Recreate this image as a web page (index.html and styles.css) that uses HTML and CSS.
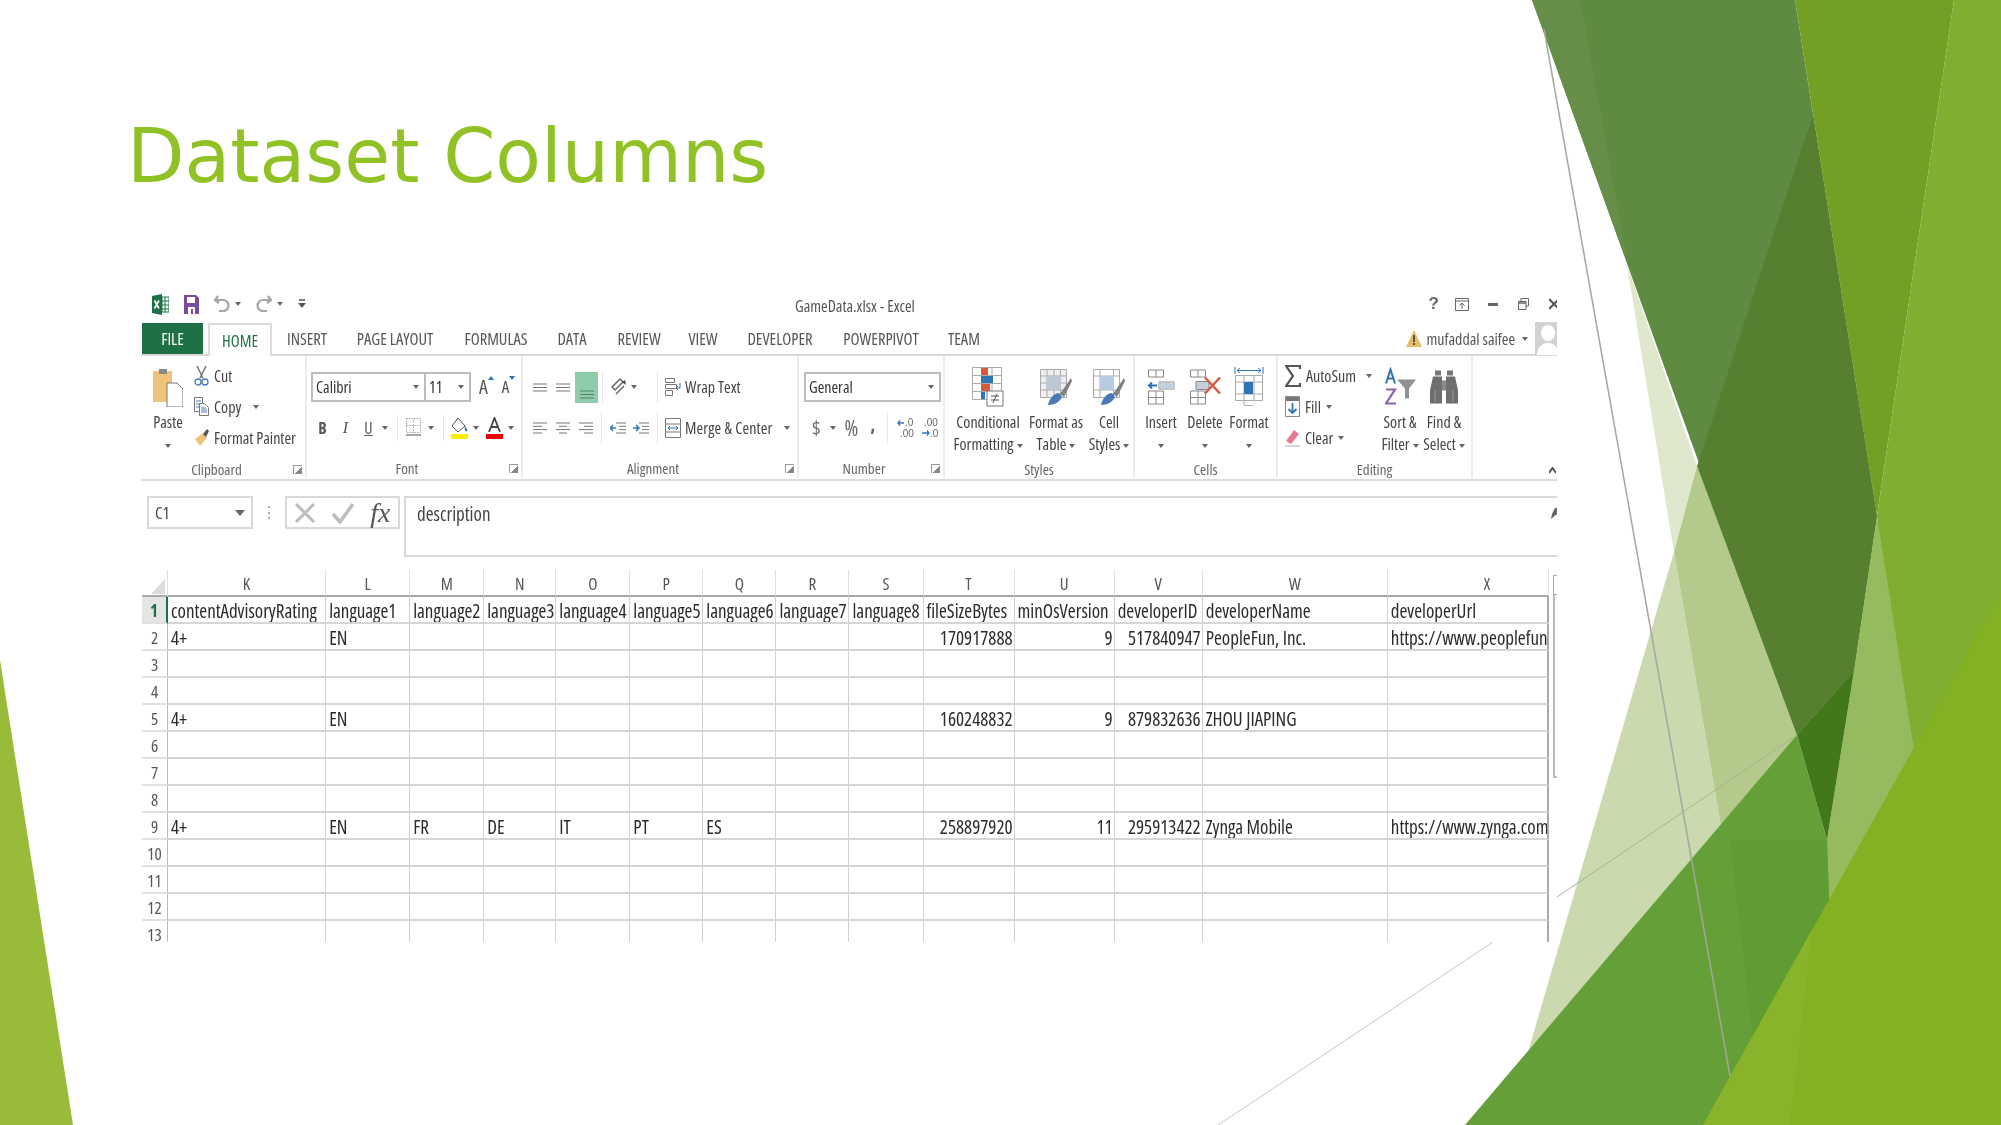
FILE: index.html
```html
<!DOCTYPE html>
<html lang="en">
<head>
<meta charset="utf-8">
<title>Dataset Columns</title>
<link rel="stylesheet" href="styles.css">
</head>
<body>
<main class="slide">
<svg class="bg" viewBox="0 0 2001 1125" width="2001" height="1125" aria-hidden="true">
  <polygon points="0,660 73,1125 0,1125" fill="#98bc3a"/>
  <polygon points="1627,265 1697,466 1674,552" fill="#dfe8cd"/>
  <polygon points="1674,552 1725,850 1528,1052" fill="#cbd9ae"/>
  <polygon points="1674,552 1697,466 1797,735 1725,850" fill="#b4ca8c"/>
  <polygon points="1532,0 1795,0 1877,516 1854,671 1797,735" fill="#5f8a41"/>
  <polygon points="1532,0 1580,0 1628,265" fill="#668e49"/>
  <polygon points="1813,115 1877,516 1854,671 1797,735 1697,466" fill="#567f30"/>
  <polygon points="1795,0 1954,0 1877,516" fill="#739f25"/>
  <polygon points="1954,0 2001,0 2001,620 1900,780 1877,516" fill="#80ae30"/>
  <polygon points="1877,516 1914,750 1820,930 1827,840 1854,671" fill="#96bb5f"/>
  <polygon points="1465,1125 1797,735 1827,840 1830,930 1720,1125" fill="#659f37"/>
  <polygon points="1730,839 1827,840 1830,930 1753,1040" fill="#5f9c31"/>
  <polygon points="1797,735 1854,671 1827,840" fill="#42781a"/>
  <polygon points="1703,1125 2001,592 2001,1125" fill="#84b024"/>
  <polygon points="1703,1125 1812,930 1790,1125" fill="#88b32b"/>
  <line x1="1544" y1="29" x2="1730" y2="1076" stroke="#a3a89a" stroke-width="1.5"/>
  <line x1="1557" y1="897" x2="1797" y2="735" stroke="#a9b392" stroke-width="1"/>
  <line x1="1218" y1="1125" x2="1493" y2="942" stroke="#c8c8c8" stroke-width="1"/>
</svg>

<h1 class="title">Dataset Columns</h1>

<section class="excel">
  <header class="titlebar">
    <div class="tb-left">
      <svg class="ml11" width="17" height="21" viewBox="0 0 17 21"><path d="M0 2 10 0v21L0 19z" fill="#1e7145"/><path d="M10 3h7v15h-7z" fill="#fff" stroke="#1e7145"/><path d="M10 7h7M10 11h7M10 15h7M13 3v15" stroke="#1e7145" fill="none"/><path d="M2.5 6.5 7 14.500M7 6.500 2.500 14.500" stroke="#fff" stroke-width="1.6"/></svg>
      <svg class="ml15" width="15" height="19" viewBox="0 0 15 19"><path d="M0 0h12l3 3v16H0z" fill="#7b4c9e"/><path d="M3 2h8v6H3z" fill="#fff"/><path d="M4 12h7v7H4z" fill="#fff"/><path d="M7 14h2v5H7z" fill="#7b4c9e"/></svg>
      <svg class="ml15" width="16" height="18" viewBox="0 0 16 18"><path d="M4 1 1 5l4 3M1.500 5H9a5 5 0 0 1 0 11H5" fill="none" stroke="#a6a6a6" stroke-width="2.200"/></svg>
      <i class="caret ml5"></i>
      <svg class="ml15" width="16" height="18" viewBox="0 0 16 18"><path d="M12 1l3 4-4 3M14.500 5H7a5 5 0 0 0 0 11h4" fill="none" stroke="#a6a6a6" stroke-width="2.200"/></svg>
      <i class="caret ml5"></i>
      <svg class="ml15" width="8" height="10" viewBox="0 0 8 10"><path d="M1 1h6" stroke="#555" stroke-width="1.500"/><path d="M0 4h8L4 9z" fill="#555"/></svg>
    </div>
    <div class="tb-title">GameData.xlsx - Excel</div>
    <div class="tb-right">
      <span class="help">?</span>
      <svg class="ml16" width="14" height="13" viewBox="0 0 14 13"><path d="M.5.500h13v12H.5z" fill="none" stroke="#666"/><path d="M1 3h12M7 11V5M4.500 7.500 7 5l2.500 2.500" fill="none" stroke="#666"/></svg>
      <svg class="ml19" width="10" height="3" viewBox="0 0 10 3"><path d="M0 0h10v3H0z" fill="#666"/></svg>
      <svg class="ml20" width="11" height="12" viewBox="0 0 11 12"><path d="M3 3V.500h7.500V8H8M.500 3.500H8V11.500H.500z" fill="none" stroke="#666"/><path d="M.5 5H8" stroke="#666" stroke-width="1.500"/></svg>
      <svg class="ml20" width="8" height="12" viewBox="0 0 8 12"><path d="M0 1 10 11M0 11 10 1" fill="none" stroke="#555" stroke-width="2"/></svg>
    </div>
  </header>

  <nav class="tabs">
    <div class="tab tab-file w61">FILE</div>
    <div class="tab tab-home w64">HOME</div>
    <div class="tab w70">INSERT</div>
    <div class="tab w106">PAGE LAYOUT</div>
    <div class="tab w96">FORMULAS</div>
    <div class="tab w56">DATA</div>
    <div class="tab w78">REVIEW</div>
    <div class="tab w50">VIEW</div>
    <div class="tab w104">DEVELOPER</div>
    <div class="tab w98">POWERPIVOT</div>
    <div class="tab w68">TEAM</div>
    <div class="user">
      <svg width="16" height="17" viewBox="0 0 16 17"><path d="M8 0 16 17H0z" fill="#e8bd6a"/><path d="M7 5h2v7H7zM7 13h2v2H7z" fill="#554"/></svg>
      <span class="user-name">mufaddal saifee</span>
      <i class="caret ml7"></i>
      <svg class="ml7" width="22" height="33" viewBox="0 0 22 33"><path d="M0 0h22v33H0z" fill="#d2d2d2"/><ellipse cx="13" cy="11" rx="7" ry="8" fill="#fff"/><path d="M2 33c0-9 6-12 11-12s9 3 9 7v5z" fill="#fff"/></svg>
    </div>
  </nav>

  <div class="ribbon">
    <div class="group g-clip">
      <div class="group-body">
        <div class="big w52">
          <svg class="big-icon" width="30" height="40" viewBox="0 0 30 40"><path d="M0 4h19v31H0z" fill="#eec37a"/><path d="M6 2h8v5H6z" fill="#8a8a8a"/><path d="M14 16h10l6 6v18H14z" fill="#fff" stroke="#777"/></svg>
          <div class="big-label">Paste<br><i class="caret"></i></div>
        </div>
        <div class="small-col up1">
          <div class="small"><svg width="15" height="20" viewBox="0 0 15 20"><path d="M3 0l6 12M12 0 6 12" stroke="#777" stroke-width="1.500"/><circle cx="4" cy="16" r="3" fill="none" stroke="#4a7ab5" stroke-width="1.300"/><circle cx="11" cy="16" r="3" fill="none" stroke="#4a7ab5" stroke-width="1.300"/></svg><span>Cut</span></div>
          <div class="small"><svg width="15" height="19" viewBox="0 0 15 19"><path d="M.5.500h8v14h-8z" fill="#fff" stroke="#777"/><path d="M5.500 6.500h5l4 4v8h-9z" fill="#fff" stroke="#777"/><path d="M2 4h5M2 7h3M2 10h3M7 11h5M7 13h6M7 15h6" stroke="#4a7ab5"/></svg><span>Copy</span><i class="caret ml12"></i></div>
          <div class="small"><svg width="15" height="18" viewBox="0 0 15 18"><path d="M1 10 9 4l4 5-7 8z" fill="#eec37a"/><path d="M9 5 13 0l2 2-3 6z" fill="#555"/></svg><span>Format Painter</span></div>
        </div>
      </div>
      <div class="group-foot"><span class="group-label">Clipboard</span><span class="launcher"></span></div>
    </div>

    <div class="group g-font">
      <div class="group-body stack">
        <div class="tool-row">
          <div class="combo w115"><span>Calibri</span><i class="caret"></i></div>
          <div class="combo w45 joined"><span>11</span><i class="caret"></i></div>
          <span class="aa aa-up">A</span>
          <span class="aa aa-down">A</span>
        </div>
        <div class="tool-row">
          <span class="fmt b">B</span><span class="fmt i">I</span><span class="fmt u">U</span><i class="caret ml2"></i>
          <span class="vsep ml9"></span>
          <svg class="ml8" width="15" height="20" viewBox="0 0 15 20"><path d="M.5.500h14v14H.5z" fill="none" stroke="#aaa" stroke-dasharray="1.500 1"/><path d="M7.500 1v14M1 7.500h13" stroke="#aaa" stroke-dasharray="1.500 1"/><path d="M0 17h15" stroke="#888" stroke-width="1.500"/></svg>
          <i class="caret ml7"></i>
          <span class="vsep ml9"></span>
          <svg class="ml7" width="17" height="22" viewBox="0 0 17 22"><path d="M7 1 1 9l6 6 7-6z" fill="#fff" stroke="#555"/><path d="M14 9c2 3 3 4 2 5-1 1-3 0-2-5z" fill="#2f75b5"/><path d="M0 17h17v5H0z" fill="#ffed00"/></svg>
          <i class="caret ml5"></i>
          <svg class="ml7" width="17" height="22" viewBox="0 0 17 22"><path d="M3 15 8.500 1 14 15M5 10h7" fill="none" stroke="#444" stroke-width="1.800"/><path d="M0 17h17v5H0z" fill="#f00000"/></svg>
          <i class="caret ml5"></i>
        </div>
      </div>
      <div class="group-foot"><span class="group-label">Font</span><span class="launcher"></span></div>
    </div>

    <div class="group g-align">
      <div class="group-body stack">
        <div class="tool-row">
          <svg class="ml10" width="14" height="9" viewBox="0 0 14 9"><path d="M0 1h14M0 4.500h14M0 8h14" stroke="#777"/></svg>
          <svg class="ml9" width="14" height="9" viewBox="0 0 14 9"><path d="M0 1h14M0 4.500h14M0 8h14" stroke="#777"/></svg>
          <span class="align-on ml5"><svg width="14" height="9" viewBox="0 0 14 9"><path d="M0 1h14M0 4.500h14M0 8h14" stroke="#55806a"/></svg></span>
          <span class="vsep ml4 tall"></span>
          <svg class="ml8" width="16" height="18" viewBox="0 0 16 18"><path d="M1 9 9 1l3 3-8 8zM5 16l8-8" fill="none" stroke="#666" stroke-width="1.500"/><path d="M14 2l1 5-4-3z" fill="#444"/></svg>
          <i class="caret ml4"></i>
          <span class="vsep ml20 tall"></span>
          <svg class="ml7" width="16" height="19" viewBox="0 0 16 19"><path d="M.5.500h9v4h-9zM.5 6.500h11v4H.5zM.5 12.500h7v5h-7z" fill="#fff" stroke="#777"/><path d="M15 5v5h-4M13 8l-2 2 2 2" fill="none" stroke="#2f75b5"/></svg>
          <span class="rtext ml4">Wrap Text</span>
        </div>
        <div class="tool-row">
          <svg class="ml10" width="14" height="12" viewBox="0 0 14 12"><path d="M0 1h14M0 4.300h9M0 7.600h14M0 11h9" stroke="#777"/></svg>
          <svg class="ml9" width="14" height="12" viewBox="0 0 14 12"><path d="M0 1h14M3 4.300h8M0 7.600h14M3 11h8" stroke="#777"/></svg>
          <svg class="ml9" width="14" height="12" viewBox="0 0 14 12"><path d="M0 1h14M5 4.300h9M0 7.600h14M5 11h9" stroke="#777"/></svg>
          <span class="vsep ml8 tall"></span>
          <svg class="ml8" width="16" height="12" viewBox="0 0 16 12"><path d="M6 1h10M9 4.300h7M9 7.600h7M6 11h10" stroke="#777"/><path d="M6 6H0M3 3 0 6l3 3" fill="none" stroke="#2f75b5" stroke-width="1.500"/></svg>
          <svg class="ml7" width="16" height="12" viewBox="0 0 16 12"><path d="M6 1h10M9 4.300h7M9 7.600h7M6 11h10" stroke="#777"/><path d="M0 6h6M3 3l3 3-3 3" fill="none" stroke="#2f75b5" stroke-width="1.500"/></svg>
          <span class="vsep ml8 tall"></span>
          <svg class="ml7" width="16" height="20" viewBox="0 0 16 20"><path d="M.5.500h15v19H.5zM.5 6h15M.5 14h15" fill="none" stroke="#777"/><path d="M3 10h10M5 8l-2 2 2 2M11 8l2 2-2 2" fill="none" stroke="#2f75b5"/></svg>
          <span class="rtext ml4 merge">Merge &amp; Center</span>
          <i class="caret ml12"></i>
        </div>
      </div>
      <div class="group-foot"><span class="group-label">Alignment</span><span class="launcher"></span></div>
    </div>

    <div class="group g-num">
      <div class="group-body stack">
        <div class="tool-row"><div class="combo w137 ml5"><span>General</span><i class="caret"></i></div></div>
        <div class="tool-row">
          <span class="num ml13">$</span><i class="caret ml9"></i>
          <span class="num ml8 pct">%</span><span class="num comma">,</span>
          <span class="vsep ml12 tall"></span>
          <svg class="ml9" width="17" height="22" viewBox="0 0 17 22"><path d="M7 6H1M3 3.500 1 6l2 2.500" fill="none" stroke="#2f75b5" stroke-width="1.300"/><text class="dec" x="8" y="9">.0</text><text class="dec" x="3" y="20">.00</text></svg>
          <svg class="ml7" width="17" height="22" viewBox="0 0 17 22"><text class="dec" x="3" y="9">.00</text><path d="M1 16h7M6 13.500 8 16l-2 2.500" fill="none" stroke="#2f75b5" stroke-width="1.300"/><text class="dec" x="9" y="20">.0</text></svg>
        </div>
      </div>
      <div class="group-foot"><span class="group-label">Number</span><span class="launcher"></span></div>
    </div>

    <div class="group g-styles">
      <div class="group-body pl9">
        <div class="big w68">
          <svg class="big-icon" width="32" height="40" viewBox="0 0 32 40"><path d="M.5.500h29v32H.5zM.5 8.500h29M.5 16.500h29M.5 24.500h29M10 .500v32M20 .500v32" fill="#fff" stroke="#aaa"/><path d="M9 1h7v7H9zM9 17h9v7H9z" fill="#d9593b"/><path d="M9 9h12v7H9zM9 25h4v7H9z" fill="#2f75b5"/><path d="M15 24h16v15H15z" fill="#fff" stroke="#777"/><path d="M19 29h8M19 33h8M25 27l-4 9" stroke="#555"/></svg>
          <div class="big-label">Conditional<br>Formatting <i class="caret"></i></div>
        </div>
        <div class="big w68">
          <svg class="big-icon" width="32" height="40" viewBox="0 0 32 40"><path d="M.5 2.500h26v28H.5zM.5 9h26M.5 16h26M.5 23h26M7 2.500v28M14 2.500v28M20.500 2.500v28" fill="#eee" stroke="#aaa"/><path d="M7 9h14v14H7z" fill="#bcc8d6"/><path d="M20 27 31 11l1 3-8 16z" fill="#808080"/><path d="M8 38c1-6 6-12 11-12l3 4c-2 4-6 8-14 8z" fill="#4a7ab5"/></svg>
          <div class="big-label">Format as<br>Table <i class="caret"></i></div>
        </div>
        <div class="big w38">
          <svg class="big-icon" width="32" height="40" viewBox="0 0 32 40"><path d="M.5 2.500h26v28H.5zM.5 9h26M.5 23h26M7 2.500v28M20.500 2.500v28" fill="#fff" stroke="#aaa"/><path d="M7 9h14v14H7z" fill="#b7cce2"/><path d="M20 27 31 11l1 3-8 16z" fill="#808080"/><path d="M8 38c1-6 6-12 11-12l3 4c-2 4-6 8-14 8z" fill="#4a7ab5"/></svg>
          <div class="big-label">Cell<br>Styles <i class="caret"></i></div>
        </div>
      </div>
      <div class="group-foot"><span class="group-label full">Styles</span></div>
    </div>

    <div class="group g-cells">
      <div class="group-body pl4">
        <div class="big w44">
          <svg class="big-icon" width="28" height="37" viewBox="0 0 28 37"><path d="M1.500 1.500h15v7h-15zM9 1.500v7M12 13.500h15v7H12zM19.500 13.500v7M1.500 22.500h15v13h-15zM1.500 29h15M9 22.500v13" fill="none" stroke="#888"/><path d="M12 14h15v6H12z" fill="#c3cfdc"/><path d="M10 17H2M5 14l-3 3 3 3" fill="none" stroke="#2f75b5" stroke-width="2"/></svg>
          <div class="big-label">Insert<br><i class="caret"></i></div>
        </div>
        <div class="big w44">
          <svg class="big-icon" width="32" height="37" viewBox="0 0 32 37"><path d="M1.500 1.500h15v7h-15zM9 1.500v7M1.500 22.500h15v13h-15zM1.500 29h15M9 22.500v13" fill="none" stroke="#888"/><path d="M7 13h13v8H7z" fill="#c3cfdc" stroke="#888"/><path d="M16 9l15 16M31 9 16 25" stroke="#d9593b" stroke-width="2.500"/></svg>
          <div class="big-label">Delete<br><i class="caret"></i></div>
        </div>
        <div class="big w44">
          <svg class="big-icon" width="30" height="40" viewBox="0 0 30 40"><path d="M1 0v7M29 0v7M3 3.500h24" fill="none" stroke="#2f75b5"/><path d="M6 1 3 3.500 6 6M24 1l3 2.500L24 6" fill="none" stroke="#2f75b5"/><path d="M1.500 8.500h27v25h-27zM1.500 15h27M1.500 27h27M10 8.500v30M20 8.500v25M10 38.500h9" fill="none" stroke="#aaa"/><path d="M10 15h9v12h-9z" fill="#2f75b5"/></svg>
          <div class="big-label">Format<br><i class="caret"></i></div>
        </div>
      </div>
      <div class="group-foot"><span class="group-label full">Cells</span></div>
    </div>

    <div class="group g-edit">
      <div class="group-body pl7">
        <div class="small-col w93 up1">
          <div class="small"><svg width="16" height="22" viewBox="0 0 16 22"><path d="M15 4V1H1l7 10-7 10h14v-3" fill="none" stroke="#555" stroke-width="2.200"/></svg><span>AutoSum</span><i class="caret ml10"></i></div>
          <div class="small"><svg width="15" height="21" viewBox="0 0 15 21"><path d="M.5.500h14v20H.5z" fill="#fff" stroke="#888"/><path d="M1 1h13v4H1z" fill="#777"/><path d="M7.500 7v10M3.500 13l4 4 4-4" fill="none" stroke="#2f75b5" stroke-width="1.800"/></svg><span>Fill</span><i class="caret ml5"></i></div>
          <div class="small"><svg width="15" height="18" viewBox="0 0 15 18"><path d="M1 12 9 1l5 4-8 10z" fill="#e77a8f"/><path d="M0 17h15" stroke="#aaa"/></svg><span>Clear</span><i class="caret ml5"></i></div>
        </div>
        <div class="big w44">
          <svg class="big-icon" width="31" height="37" viewBox="0 0 31 37"><path d="M1 15 5.500 1 10 15M3 10h5" fill="none" stroke="#2f75b5" stroke-width="2"/><path d="M1 21h9L1 35h10" fill="none" stroke="#8a62ad" stroke-width="2.200"/><path d="M12 11h19l-7 9v10h-4V20z" fill="#909090"/></svg>
          <div class="big-label">Sort &amp;<br>Filter <i class="caret"></i></div>
        </div>
        <div class="big w44">
          <svg class="big-icon" width="28" height="33" viewBox="0 0 28 33"><path d="M5 0h6v5H5zM17 0h6v5h-6z" fill="#777"/><path d="M3 6h9v27H0V20zM16 6h9l3 14v13H16z" fill="#6e6e6e"/><path d="M12 10h4v10h-4z" fill="#8a8a8a"/><path d="M5 20v11M23 20v11" stroke="#9a9a9a"/></svg>
          <div class="big-label">Find &amp;<br>Select <i class="caret"></i></div>
        </div>
      </div>
      <div class="group-foot"><span class="group-label full">Editing</span></div>
    </div>
    <svg class="collapse" width="7" height="7" viewBox="0 0 7 7"><path d="M0 6 3.500 1 7 6" fill="none" stroke="#555" stroke-width="2"/></svg>
  </div>

  <div class="formula">
    <div class="namebox"><span>C1</span><i class="caret caret-lg"></i></div>
    <span class="dots">⋮</span>
    <div class="fxbox">
      <svg width="22" height="22" viewBox="0 0 22 22"><path d="M2 2l18 18M20 2 2 20" stroke="#bdbdbd" stroke-width="3"/></svg>
      <svg width="24" height="22" viewBox="0 0 24 22"><path d="M2 12l7 8L22 2" fill="none" stroke="#bdbdbd" stroke-width="3.500"/></svg>
      <span class="fx">fx</span>
    </div>
    <div class="input"><span>description</span>
      <svg class="pencil" width="6" height="11" viewBox="0 0 6 11"><path d="M0 11 1 6 4 0h2v6z" fill="#666"/></svg>
    </div>
  </div>

  <div class="sheet-wrap">
    <table class="sheet">
      <colgroup><col class="c-r"><col class="c-k"><col class="c-l"><col class="c-m"><col class="c-n"><col class="c-o"><col class="c-p"><col class="c-q"><col class="c-r2"><col class="c-s"><col class="c-t"><col class="c-u"><col class="c-v"><col class="c-w"><col class="c-x"></colgroup>
      <thead>
        <tr><th class="corner"><span></span></th><th>K</th><th>L</th><th>M</th><th>N</th><th>O</th><th>P</th><th>Q</th><th>R</th><th>S</th><th>T</th><th>U</th><th>V</th><th>W</th><th class="col-x">X</th></tr>
      </thead>
      <tbody>
        <tr class="first"><th class="active">1</th><td>contentAdvisoryRating</td><td>language1</td><td>language2</td><td>language3</td><td>language4</td><td>language5</td><td>language6</td><td>language7</td><td>language8</td><td>fileSizeBytes</td><td>minOsVersion</td><td>developerID</td><td>developerName</td><td>developerUrl</td></tr>
        <tr><th>2</th><td>4+</td><td>EN</td><td></td><td></td><td></td><td></td><td></td><td></td><td></td><td class="n">170917888</td><td class="n">9</td><td class="n">517840947</td><td>PeopleFun, Inc.</td><td>https://www.peoplefun</td></tr>
        <tr><th>3</th><td></td><td></td><td></td><td></td><td></td><td></td><td></td><td></td><td></td><td></td><td></td><td></td><td></td><td></td></tr>
        <tr><th>4</th><td></td><td></td><td></td><td></td><td></td><td></td><td></td><td></td><td></td><td></td><td></td><td></td><td></td><td></td></tr>
        <tr><th>5</th><td>4+</td><td>EN</td><td></td><td></td><td></td><td></td><td></td><td></td><td></td><td class="n">160248832</td><td class="n">9</td><td class="n">879832636</td><td>ZHOU JIAPING</td><td></td></tr>
        <tr><th>6</th><td></td><td></td><td></td><td></td><td></td><td></td><td></td><td></td><td></td><td></td><td></td><td></td><td></td><td></td></tr>
        <tr><th>7</th><td></td><td></td><td></td><td></td><td></td><td></td><td></td><td></td><td></td><td></td><td></td><td></td><td></td><td></td></tr>
        <tr><th>8</th><td></td><td></td><td></td><td></td><td></td><td></td><td></td><td></td><td></td><td></td><td></td><td></td><td></td><td></td></tr>
        <tr><th>9</th><td>4+</td><td>EN</td><td>FR</td><td>DE</td><td>IT</td><td>PT</td><td>ES</td><td></td><td></td><td class="n">258897920</td><td class="n">11</td><td class="n">295913422</td><td>Zynga Mobile</td><td>https://www.zynga.com</td></tr>
        <tr><th>10</th><td></td><td></td><td></td><td></td><td></td><td></td><td></td><td></td><td></td><td></td><td></td><td></td><td></td><td></td></tr>
        <tr><th>11</th><td></td><td></td><td></td><td></td><td></td><td></td><td></td><td></td><td></td><td></td><td></td><td></td><td></td><td></td></tr>
        <tr><th>12</th><td></td><td></td><td></td><td></td><td></td><td></td><td></td><td></td><td></td><td></td><td></td><td></td><td></td><td></td></tr>
        <tr><th>13</th><td></td><td></td><td></td><td></td><td></td><td></td><td></td><td></td><td></td><td></td><td></td><td></td><td></td><td></td></tr>
      </tbody>
    </table>
    <div class="vscroll"><span class="vs-btn"></span><span class="vs-thumb"></span></div>
  </div>
</section>
</main>
</body>
</html>
```

FILE: styles.css
```css
* { box-sizing: border-box; }
html, body { margin: 0; padding: 0; background: #fff; }
.slide { position: relative; width: 2001px; height: 1125px; overflow: hidden; background: #fff; }
.bg { position: absolute; left: 0; top: 0; }

.title {
  position: relative;
  margin: 0;
  height: 285px;
  padding: 112px 0 0 127px;
  font: 400 74.700px/90px "DejaVu Sans", sans-serif;
  color: #90c226;
}

.excel {
  position: relative;
  width: 1416px;
  height: 657px;
  margin-left: 141px;
  overflow: hidden;
  background: #fff;
  color: #444;
  font-family: "Open Sans", "Liberation Sans", sans-serif;
  font-stretch: 75%;
  font-size: 16px;
  line-height: 22px;
  filter: blur(.5px);
}

/* utility widths and offsets */
.w38 { width: 38px; } .w44 { width: 44px; } .w45 { width: 45px; } .w50 { width: 50px; }
.w52 { width: 52px; } .w56 { width: 56px; } .w61 { width: 61px; } .w64 { width: 64px; }
.w68 { width: 68px; } .w70 { width: 70px; } .w78 { width: 78px; } .w93 { width: 93px; }
.w96 { width: 96px; } .w98 { width: 98px; } .w104 { width: 104px; } .w106 { width: 106px; }
.w115 { width: 115px; } .w137 { width: 137px; }
.ml2 { margin-left: 2px; } .ml4 { margin-left: 4px; } .ml5 { margin-left: 5px; } .ml7 { margin-left: 7px; }
.ml8 { margin-left: 8px; } .ml9 { margin-left: 9px; } .ml10 { margin-left: 10px; } .ml11 { margin-left: 11px; }
.ml12 { margin-left: 12px; } .ml13 { margin-left: 13px; } .ml15 { margin-left: 15px; } .ml16 { margin-left: 16px; }
.ml19 { margin-left: 19px; } .ml20 { margin-left: 20px; }
.pl4 { padding-left: 4px; } .pl7 { padding-left: 7px; } .pl9 { padding-left: 9px; }
.up1 { margin-top: -1px; }

.caret { display: inline-block; flex: none; width: 0; height: 0; vertical-align: middle;
  border-left: 3.500px solid transparent; border-right: 3.500px solid transparent; border-top: 4px solid #666; }
.caret-lg { border-left-width: 5px; border-right-width: 5px; border-top-width: 6px; }

/* title bar */
.titlebar { display: flex; align-items: center; height: 38px; }
.tb-left { display: flex; align-items: center; width: 654px; flex: none; }
.tb-title { font-size: 16px; color: #555; margin-top: 4px; }
.tb-right { display: flex; align-items: center; margin-left: auto; }
.help { font: 700 17px/20px "Liberation Sans", sans-serif; color: #666; }

/* tabs */
.tabs { display: flex; align-items: stretch; height: 33px; padding-left: 1px; border-bottom: 2px solid #d8d8d8; font-size: 16.500px; }
.tab { flex: none; display: flex; align-items: center; justify-content: center; color: #555; }
.tab-file { background: #1e7145; color: #fff; margin-right: 5px; }
.tab-home { color: #1e7145; background: #fff; border: 2px solid #dcdcdc; border-bottom: 0; height: 33px; }
.user { display: flex; align-items: center; margin-left: auto; font-size: 16px; color: #555; }
.user-name { margin-left: 5px; }

/* ribbon */
.ribbon { position: relative; display: flex; height: 125px; border-bottom: 2px solid #dcdcdc; padding-left: 1px; }
.group { display: flex; flex-direction: column; flex: none; height: 122px; border-right: 2px solid #ececec; }
.g-clip { width: 165px; } .g-font { width: 216px; } .g-align { width: 276px; } .g-num { width: 146px; }
.g-styles { width: 190px; } .g-cells { width: 143px; } .g-edit { width: 195px; }
.group-body { display: flex; height: 101px; padding-top: 5px; }
.group-foot { display: flex; align-items: center; height: 24px; padding-top: 4px; font-size: 15px; color: #666; }
.group-label { flex: 1; text-align: center; }
.launcher { flex: none; width: 9px; height: 9px; margin: 0 3px 0 2px; border-left: 1px solid #999; border-top: 1px solid #999;
  background: linear-gradient(135deg, transparent 55%, #888 55%); }

.big { display: flex; flex-direction: column; align-items: center; flex: none; text-align: center; white-space: nowrap; }
.big-icon { flex: none; height: 40px; margin-top: 6px; margin-bottom: 4px; }
.big-label { line-height: 22px; }
.small-col { display: flex; flex-direction: column; flex: none; }
.small { display: flex; align-items: center; height: 31px; white-space: nowrap; }
.small span { margin-left: 5px; }

.stack { flex-direction: column; padding-top: 16px; gap: 11px; }
.tool-row { display: flex; align-items: center; height: 30px; white-space: nowrap; }
.g-font .tool-row { padding-left: 4px; }
.combo { display: flex; align-items: center; justify-content: space-between; flex: none; height: 30px; padding: 0 5px 0 3px;
  border: 2px solid #bdbdbd; color: #333; background: #fff; }
.joined { border-left: 0; }
.aa { position: relative; font-size: 20px; line-height: 24px; color: #555; }
.aa::after { content: ""; position: absolute; right: -6px; width: 0; height: 0; border-left: 3px solid transparent; border-right: 3px solid transparent; }
.aa-up { margin-left: 8px; }
.aa-up::after { top: 1px; border-bottom: 4px solid #2f75b5; }
.aa-down { margin-left: 14px; font-size: 17px; }
.aa-down::after { top: 1px; border-top: 4px solid #2f75b5; }
.fmt { width: 23px; text-align: center; color: #555; font-size: 16px; }
.b { font-weight: 700; } .i { font-style: italic; font-family: "Liberation Serif", serif; } .u { text-decoration: underline; }
.vsep { flex: none; width: 1px; height: 26px; background: #e6e6e6; }
.tall { height: 30px; }
.align-on { display: flex; align-items: flex-end; justify-content: center; width: 23px; height: 31px; padding-bottom: 4px; background: #8fcdaa; flex: none; }
.rtext { color: #444; }
.merge { letter-spacing: .15px; }
.num { font-size: 20px; color: #666; }
.pct { font-size: 21px; margin-left: 9px; }
.comma { margin-left: 12px; margin-top: -9px; font-weight: 700; }
.dec { font: 10px "Liberation Sans", sans-serif; fill: #666; }
.collapse { position: absolute; right: 1px; top: 111px; }

/* formula bar */
.formula { display: flex; height: 89px; padding: 15px 0 13px 6px; color: #555; }
.namebox { display: flex; align-items: center; justify-content: space-between; flex: none; width: 106px; height: 33px; padding: 0 6px 0 6px;
  border: 2px solid #d8d8d8; color: #444; font-size: 17px; }
.dots { width: 32px; flex: none; height: 33px; text-align: center; line-height: 33px; color: #999; }
.fxbox { display: flex; align-items: center; justify-content: space-around; flex: none; width: 115px; height: 33px; border: 2px solid #d8d8d8; }
.fx { font: italic 28px/30px "Liberation Serif", serif; color: #555; }
.input { position: relative; flex: 1; margin-left: 4px; height: 61px; padding-left: 11px; border: 2px solid #d8d8d8; border-right: 0; font-size: 19px; line-height: 32px; color: #444; }
.pencil { position: absolute; right: 0; top: 10px; }

/* sheet */
.sheet-wrap { display: flex; align-items: flex-start; height: 372px; overflow: hidden; }
.sheet { table-layout: fixed; border-collapse: separate; border-spacing: 0; width: 1407px; flex: none; margin-left: 1px; font-size: 19px; line-height: 22px; color: #2a2a2a; }
.c-r { width: 26px; } .c-k { width: 158px; } .c-l { width: 84px; } .c-m { width: 74px; } .c-n { width: 72px; } .c-o { width: 74px; }
.c-p { width: 73px; } .c-q { width: 73px; } .c-r2 { width: 73px; } .c-s { width: 74px; } .c-t { width: 91px; } .c-u { width: 100px; }
.c-v { width: 88px; } .c-w { width: 185px; } .c-x { width: 161px; }
.sheet tr { height: 27px; }
.sheet th, .sheet td { padding: 0; overflow: hidden; white-space: nowrap; }
.sheet thead th { height: 27px; padding-top: 3px; line-height: 22px; font-weight: 400; font-size: 17px; color: #555; border-bottom: 2px solid #a9a9a9; border-right: 1px solid #e0e0e0; text-align: center; }
.sheet thead .col-x { padding-left: 38px; }
.sheet tbody th { padding-top: 3px; line-height: 22px; font-weight: 400; font-size: 17px; color: #555; border-bottom: 2px solid #e0e0e0; border-right: 1px solid #bbb; text-align: center; }
.sheet td { height: 27px; padding: 3px 1px 0 3px; border-bottom: 2px solid #d6d6d6; border-right: 1px solid #d2d2d2; }
.sheet td:last-child { border-right: 2px solid #a9a9a9; }
.sheet .n { text-align: right; }
.sheet .corner { padding-top: 0; }
.sheet .corner span { display: block; width: 0; height: 0; margin: 7px 0 0 9px; border-left: 14px solid transparent; border-bottom: 15px solid #dcdcdc; }
.sheet .active { background: #e4e4e4; color: #1e7145; font-weight: 700; border-right: 2px solid #1e7145; }
.vscroll { display: flex; flex-direction: column; flex: none; width: 5px; margin: 5px 0 0 4px; }
.vs-btn { display: block; height: 20px; border: 1px solid #aaa; border-right: 0; }
.vs-thumb { display: block; height: 183px; border-left: 2px solid #bbb; border-bottom: 2px solid #bbb; }
```
